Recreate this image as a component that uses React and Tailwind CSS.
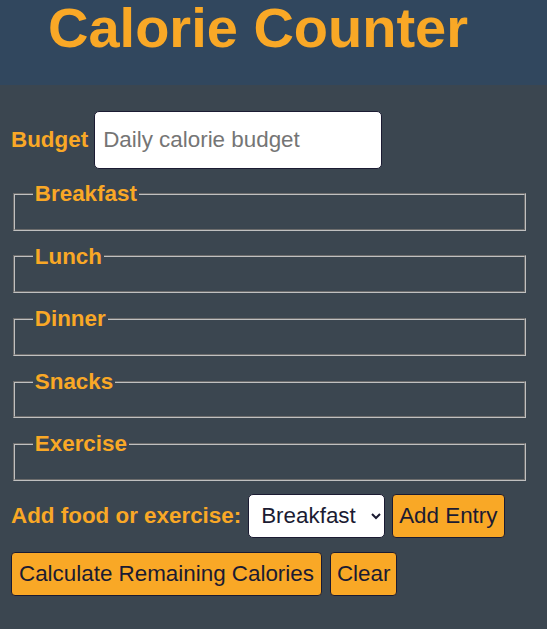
export default function App() {
  const sections = ["Breakfast", "Lunch", "Dinner", "Snacks", "Exercise"];
  return (
    <div className="min-h-screen bg-[#3b4650] font-['Liberation_Sans',Arial,sans-serif] text-[22.4px] leading-[1.15] text-[#f9a826]">
      <header className="h-[85px] bg-[#31475e] pl-[48px]">
        <h1 className="text-[56px] font-bold leading-[55px]">Calorie Counter</h1>
      </header>
      <main className="pl-[11px] pr-[19px] pt-[26px]">
        <div className="flex items-baseline gap-[6px]">
          <label className="font-bold">Budget</label>
          <input
            type="text"
            placeholder="Daily calorie budget"
            className="h-[58px] w-[288px] rounded-[5px] border border-[#1b1b32] bg-white px-[8px] text-[#1b1b32] placeholder:text-[#757575] outline-none"
          />
        </div>
        <div className="mt-[12px] flex flex-col gap-[13px]">
          {sections.map((s) => (
            <fieldset
              key={s}
              className="mx-[2px] min-w-0 border-2 border-[#c0c0c0] [border-style:groove] pl-[17.8px] pr-[16.8px] pt-[7.84px] pb-[14px]"
            >
              <legend className="px-[2px] font-bold">{s}</legend>
            </fieldset>
          ))}
        </div>
        <div className="mt-[13px] flex items-center gap-[7px]">
          <label className="font-bold">Add food or exercise:</label>
          <select className="h-[44px] w-[137px] rounded-[5px] border border-[#1b1b32] bg-white pl-[8px] text-[#1b1b32]">
            <option>Breakfast</option>
            <option>Lunch</option>
            <option>Dinner</option>
            <option>Snacks</option>
            <option>Exercise</option>
          </select>
          <button className="rounded-[4px] border border-[#1b1b32] bg-[#f9a826] px-[6px] py-[8px] text-[#1b1b32]">
            Add Entry
          </button>
        </div>
        <div className="mt-[14px] flex items-center gap-[8px]">
          <button className="rounded-[4px] border border-[#1b1b32] bg-[#f9a826] px-[7px] py-[8px] text-[#1b1b32]">
            Calculate Remaining Calories
          </button>
          <button className="rounded-[4px] border border-[#1b1b32] bg-[#f9a826] px-[6px] py-[8px] text-[#1b1b32]">
            Clear
          </button>
        </div>
      </main>
    </div>
  );
}
